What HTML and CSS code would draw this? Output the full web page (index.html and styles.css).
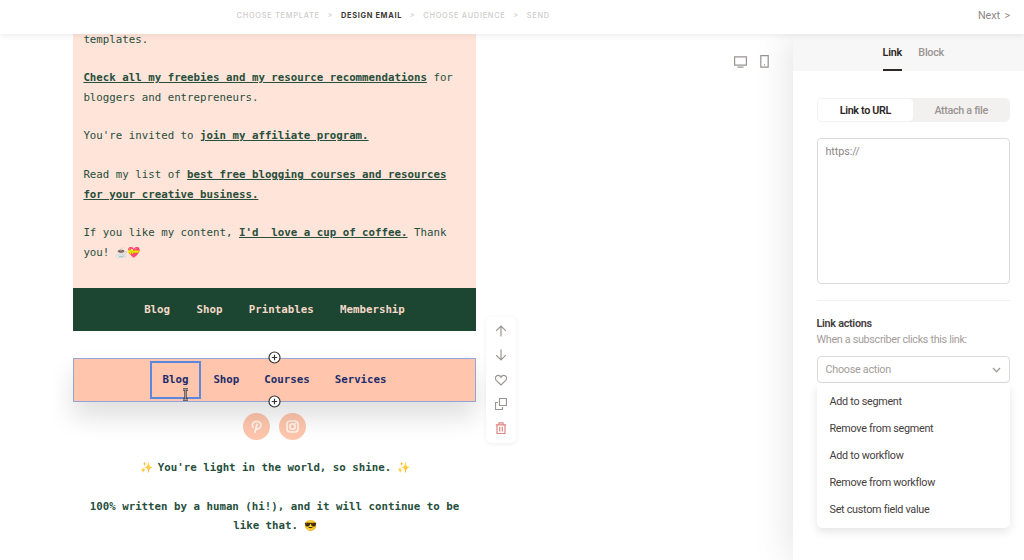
FILE: index.html
```html
<!DOCTYPE html>
<html lang="en">
<head>
    <meta charset="UTF-8">
    <meta name="viewport" content="width=device-width, initial-scale=1.0">
    <title>Design email</title>
    <link rel="stylesheet" href="styles.css">
</head>
<body>
    <header>
        <ul class="steps">
            <li>Choose template</li>
            <li class="sep">&gt;</li>
            <li class="active">Design email</li>
            <li class="sep">&gt;</li>
            <li>Choose audience</li>
            <li class="sep">&gt;</li>
            <li>Send</li>
        </ul>
        <a href="#" class="next">Next <span>&gt;</span></a>
    </header>
    <div class="layout">
        <main>
            <div class="email">
                <section class="email-text">
                    <p>templates.</p>
                    <p><a href="#">Check all my freebies and my resource recommendations</a> for bloggers and entrepreneurs.</p>
                    <p>You're invited to <a href="#">join my affiliate program.</a></p>
                    <p>Read my list of <a href="#">best free blogging courses and resources for your creative business.</a></p>
                    <p>If you like my content, <a href="#">I'd&nbsp; love a cup of coffee.</a> Thank you! <span class="emoji">☕️</span><span class="emoji heart">💝</span></p>
                </section>
                <nav class="menu menu-dark">
                    <a href="#">Blog</a>
                    <a href="#">Shop</a>
                    <a href="#">Printables</a>
                    <a href="#">Membership</a>
                </nav>
                <nav class="menu menu-selected">
                    <a href="#" class="selected">Blog</a>
                    <a href="#">Shop</a>
                    <a href="#">Courses</a>
                    <a href="#">Services</a>
                    <svg class="add add-top" viewBox="0 0 13 13"><circle cx="6.5" cy="6.5" r="5.5"/><path d="M6.5 3.8v5.4M3.8 6.5h5.4"/></svg>
                    <svg class="add add-bottom" viewBox="0 0 13 13"><circle cx="6.5" cy="6.5" r="5.5"/><path d="M6.5 3.8v5.4M3.8 6.5h5.4"/></svg>
                    <svg class="cursor" viewBox="0 0 7 13"><path class="cursor-edge" d="M1 1.5h5M1 11.5h5M3.5 1.5v10"/><path class="cursor-fill" d="M1 1.5h5M1 11.5h5M3.5 1.5v10"/></svg>
                </nav>
                <div class="social">
                    <a href="#">
                        <svg viewBox="0 0 27 27"><path d="M12 19.2l2-8M10.2 14.3c-1.9-2.6-.2-6 3.4-6 3 0 4.7 2 4.2 4.5-.5 2.9-3.5 4.4-4.9 2.2"/></svg>
                    </a>
                    <a href="#">
                        <svg viewBox="0 0 27 27"><rect x="8" y="8" width="11" height="11" rx="3"/><circle cx="13.5" cy="13.5" r="2.7"/><path d="M16.6 10.4h.1"/></svg>
                    </a>
                </div>
                <section class="email-outro">
                    <p><span class="emoji sparkles">✨</span> You're light in the world, so shine. <span class="emoji sparkles">✨</span></p>
                    <p>100% written by a human (hi!), and it will continue to be like that. <span class="emoji">😎</span></p>
                </section>
            </div>
            <div class="toolbar">
                <svg viewBox="0 0 12 12"><path d="M6 11.5V1M1.2 5.8L6 1l4.8 4.8"/></svg>
                <svg viewBox="0 0 12 12"><path d="M6 .5V11M1.2 6.2L6 11l4.8-4.8"/></svg>
                <svg viewBox="0 0 12 12"><path d="M6 11L1.3 6.3C-.6 4 1 1.3 3.2 1.3 4.5 1.3 5.5 2 6 3.2 6.5 2 7.5 1.3 8.8 1.3 11 1.3 12.6 4 10.7 6.3z"/></svg>
                <svg viewBox="0 0 12 12"><path d="M4.5.5h7v7h-7zM2.9 4.5H.5v7h7V9.1"/></svg>
                <svg class="delete" viewBox="0 0 12 12"><path d="M.8 2.8h10.4M4 2.6V.8h4v1.8M2 3v8.5h8V3M4.7 5v4.5M7.3 5v4.5"/></svg>
            </div>
            <div class="devices">
                <svg class="desktop" viewBox="0 0 13 12"><path d="M.6.9h11.8v8.3H.6zM3.5 11.2h6"/></svg>
                <svg class="mobile" viewBox="0 0 9 13"><path d="M.8.7h7.4v11.5H.8zM4 9.8h1"/></svg>
            </div>
        </main>
        <aside>
            <div class="tabs">
                <a href="#" class="active">Link</a>
                <a href="#">Block</a>
            </div>
            <div class="panel">
                <div class="switch">
                    <button class="active">Link to URL</button>
                    <button>Attach a file</button>
                </div>
                <div class="url-input">https://</div>
                <div class="link-actions">
                    <h3>Link actions</h3>
                    <p>When a subscriber clicks this link:</p>
                    <div class="select">
                        <span>Choose action</span>
                        <svg viewBox="0 0 9 6"><path d="M1 1l3.5 3.7L8 1"/></svg>
                    </div>
                    <ul class="options">
                        <li>Add to segment</li>
                        <li>Remove from segment</li>
                        <li>Add to workflow</li>
                        <li>Remove from workflow</li>
                        <li>Set custom field value</li>
                    </ul>
                </div>
            </div>
        </aside>
    </div>
</body>
</html>
```
FILE: styles.css
```css
* {
    box-sizing: border-box;
}
body {
    margin: 0;
    height: 560px;
    overflow: hidden;
    display: flex;
    flex-direction: column;
    font-family: Roboto, "Liberation Sans", sans-serif;
    font-size: 10.8px;
    letter-spacing: -0.28px;
    background: #fff;
    color: #45403e;
}
ul, p, h3 {
    list-style: none;
    margin: 0;
    padding: 0;
}
a {
    color: inherit;
    text-decoration: none;
}
svg {
    display: block;
    fill: none;
    stroke: currentColor;
    flex: none;
}
header {
    height: 34px;
    flex: none;
    display: flex;
    align-items: center;
    justify-content: space-between;
    padding: 0 14px 4px 236.5px;
    position: relative;
    z-index: 10;
    background: #fff;
    box-shadow: 0 1px 7px rgba(0, 0, 0, 0.09);
}
.steps {
    display: flex;
    font-family: Inter, sans-serif;
    font-size: 7.4px;
    font-weight: 500;
    letter-spacing: 0.73px;
    text-transform: uppercase;
    color: #d0ccca;
}
.steps .active {
    color: #3d3836;
    font-weight: 700;
    letter-spacing: 0.68px;
}
.steps .sep {
    padding: 0 7.8px;
}
.next {
    color: #8d8886;
    letter-spacing: -0.1px;
}
.next span {
    margin-left: 2px;
}
.layout {
    flex: 1;
    min-height: 0;
    display: flex;
}
main {
    flex: 1;
    display: flex;
    align-items: flex-start;
    padding-left: 73px;
}
.email {
    width: 403px;
    margin-top: -4.5px;
    font-family: "DejaVu Sans Mono", monospace;
    font-size: 10.77px;
    line-height: 19.39px;
    letter-spacing: 0;
    color: #274f3c;
}
.email p + p {
    margin-top: 19.39px;
}
.email-text {
    height: 258.5px;
    padding: 0 10px 0 10.4px;
    background: #ffe4d9;
}
.email-text a {
    font-weight: bold;
    text-decoration: underline;
}
.emoji {
    font-family: "Noto Color Emoji", sans-serif;
    font-size: 10.5px;
    letter-spacing: -1.8px;
    line-height: 1;
}
.heart {
    filter: hue-rotate(12deg) saturate(1.3);
}
.sparkles {
    filter: hue-rotate(-12deg);
}
.menu {
    display: flex;
    align-items: center;
    justify-content: center;
    height: 43px;
    font-weight: bold;
}
.menu-dark {
    gap: 26.4px;
    background: #1c4532;
    color: #f5d9c8;
}
.menu-selected {
    position: relative;
    height: 44px;
    margin-top: 27px;
    background: #ffc6ad;
    border: 1px solid #93a5d8;
    color: #1c2b6b;
    box-shadow: 0 15px 26px rgba(0, 0, 0, 0.13);
}
.menu-selected a {
    padding: 9px 12.5px;
}
.menu-selected .selected {
    outline: 2px solid #5a88df;
    outline-offset: -2px;
}
.add {
    position: absolute;
    left: 194px;
    width: 13px;
    height: 13px;
    fill: #fff;
    stroke: #333;
    stroke-width: 1.2;
}
.add-top {
    top: -8px;
}
.add-bottom {
    bottom: -7px;
}
.cursor {
    position: absolute;
    left: 107.5px;
    top: 29px;
    width: 7px;
    height: 13px;
}
.cursor-edge {
    stroke: #444;
    stroke-width: 2.4;
}
.cursor-fill {
    stroke: #b9a79d;
    stroke-width: 0.8;
}
.social {
    display: flex;
    justify-content: center;
    gap: 9px;
    padding: 11px 0 0;
}
.social a {
    width: 27px;
    height: 27px;
    border-radius: 50%;
    background: #ffc6ad;
    color: #fff3ec;
}
.social svg {
    stroke-width: 1.7;
    stroke-linecap: round;
}
.email-outro {
    padding: 18px 10px 0;
    font-weight: bold;
    text-align: center;
}
.toolbar {
    position: relative;
    width: 30px;
    height: 126px;
    margin: 283px 0 0 10px;
    padding: 8px 0 9px;
    display: flex;
    flex-direction: column;
    align-items: center;
    justify-content: space-between;
    background: #fff;
    border-radius: 5px;
    box-shadow: 0 1px 4px rgba(0, 0, 0, 0.07);
    color: #9a9492;
}
.toolbar svg {
    width: 12px;
    height: 12px;
    stroke-width: 1.2;
}
.toolbar .delete {
    color: #de8680;
}
.devices {
    display: flex;
    align-items: center;
    gap: 13px;
    margin: 21px 23.5px 0 auto;
    color: #9a9492;
}
.devices svg {
    stroke-width: 1.2;
}
.desktop {
    width: 13px;
    height: 12px;
}
.mobile {
    width: 9px;
    height: 13px;
}
aside {
    width: 231.5px;
    background: #fff;
    box-shadow: 0 0 38px rgba(0, 0, 0, 0.13);
    position: relative;
}
.tabs {
    height: 37px;
    display: flex;
    justify-content: center;
    gap: 16.5px;
    background: #f7f7f7;
    color: #9a9492;
    font-weight: 500;
    padding-left: 10px;
}
.tabs a {
    line-height: 37px;
}
.tabs .active {
    color: #2d2826;
    font-weight: 600;
    border-bottom: 2px solid #2d2826;
}
.panel {
    padding: 27px 14px 0 24px;
}
.switch {
    height: 24px;
    display: flex;
    padding: 1px;
    background: #f3f1f0;
    border-radius: 5px;
}
.switch button {
    flex: 1;
    border: none;
    border-radius: 4px;
    background: none;
    padding: 0;
    font: inherit;
    font-weight: 500;
    letter-spacing: -0.35px;
    color: #9a9492;
}
.switch .active {
    background: #fff;
    color: #2d2826;
    font-weight: 600;
}
.url-input {
    height: 146px;
    margin-top: 16px;
    padding: 6px 8px;
    border: 1px solid #dddbda;
    border-radius: 4px;
    letter-spacing: -0.1px;
    color: #8d8886;
}
.link-actions {
    margin-top: 16px;
    padding-top: 15px;
    border-top: 1px solid #f3f1f0;
    line-height: 15.7px;
}
.link-actions h3 {
    font-size: inherit;
    font-weight: 600;
}
.link-actions p {
    color: #a39d9a;
    letter-spacing: -0.32px;
}
.select {
    height: 27px;
    margin-top: 9px;
    padding: 0 8px;
    display: flex;
    align-items: center;
    justify-content: space-between;
    border: 1px solid #dddbda;
    border-radius: 4px;
    color: #a39d9a;
}
.select svg {
    width: 9px;
    height: 6px;
    stroke-width: 1.3;
}
.options {
    height: 145px;
    padding: 5px 13px;
    line-height: 27px;
    border-radius: 0 0 5px 5px;
    box-shadow: 0 4px 10px rgba(0, 0, 0, 0.1);
}
```
